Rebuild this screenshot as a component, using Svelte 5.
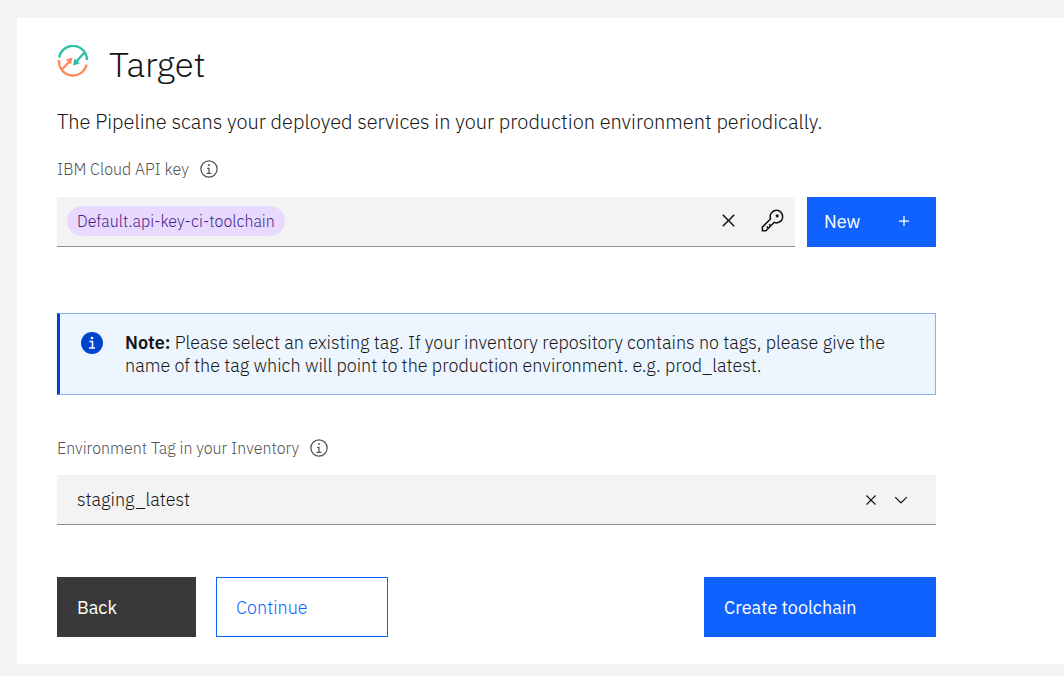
<script>
  let tag = $state('staging_latest');
  let keyName = $state('Default.api-key-ci-toolchain');
</script>

{#snippet info()}
  <svg width="20" height="20" viewBox="0 0 32 32" fill="currentColor" aria-hidden="true">
    <path d="M17 22V14H13v2h2v6H12v2h8V22zM16 8a1.5 1.5 0 1 0 1.5 1.5A1.5 1.5 0 0 0 16 8z" />
    <path d="M16 30A14 14 0 1 1 30 16 14 14 0 0 1 16 30zm0-26A12 12 0 1 0 28 16 12 12 0 0 0 16 4z" />
  </svg>
{/snippet}

{#snippet close(size)}
  <svg width={size} height={size} viewBox="0 0 32 32" fill="currentColor" aria-hidden="true">
    <path d="M24 9.4L22.6 8 16 14.6 9.4 8 8 9.4 14.6 16 8 22.6 9.4 24 16 17.4 22.6 24 24 22.6 17.4 16z" />
  </svg>
{/snippet}

<main>
  <section class="content">
    <header>
      <svg width="32" height="32" viewBox="0 0 32 32" fill="none" stroke-width="2.4" aria-hidden="true">
        <g stroke="#2bc0a8">
          <path d="M2.200 12.500A14 14 0 0 1 30 15" />
          <path d="M27 8L19 17" />
        </g>
        <path fill="#2bc0a8" d="M16 20.500l1.500-7 5.200 5z" />
        <g stroke="#fb8a5c">
          <path d="M2 15A14 14 0 0 0 29.600 19.500" />
          <path d="M4.500 25L12 17" />
        </g>
        <path fill="#fb8a5c" d="M15.500 12.500l-1.500 7-5.200-5z" />
      </svg>
      <h1>Target</h1>
    </header>
    <p class="intro">The Pipeline scans your deployed services in your production environment periodically.</p>

    <div class="label">
      <span id="key-label">IBM Cloud API key</span>
      <button class="icon" aria-label="About the API key">{@render info()}</button>
    </div>
    <div class="key-row">
      <div class="field" role="group" aria-labelledby="key-label">
        <div class="value">{#if keyName}<span class="chip">{keyName}</span>{/if}</div>
        <button class="icon" aria-label="Clear API key" onclick={() => (keyName = '')}>{@render close(25)}</button>
        <button class="icon key" aria-label="Choose a stored key">
          <svg width="25" height="25" viewBox="0 0 32 32" fill="currentColor" aria-hidden="true">
            <path d="M21 2a9 9 0 0 0-8.612 11.612L2 24v6h6l10.388-10.388A9 9 0 1 0 21 2zm0 16a7 7 0 0 1-2.032-.302l-1.147-.348-.847.847-3.181 3.181L12.414 20 11 21.414l1.379 1.379-1.586 1.586L9.414 23 8 24.414l1.379 1.379L7.172 28H4v-3.172l9.802-9.802.848-.847-.348-1.147A7 7 0 1 1 21 18z" />
            <circle cx="22" cy="10" r="2" />
          </svg>
        </button>
      </div>
      <button class="new">
        New
        <svg width="20" height="20" viewBox="0 0 32 32" fill="currentColor" aria-hidden="true">
          <path d="M17 15V8h-2v7H8v2h7v7h2v-7h7v-2z" />
        </svg>
      </button>
    </div>

    <div class="note">
      <svg width="24" height="24" viewBox="0 0 24 24" aria-hidden="true">
        <circle cx="12" cy="12" r="11" fill="#0043ce" />
        <circle cx="12" cy="7" r="1.300" fill="#fff" />
        <path d="M9.500 10.500h3v6M9 17h6" fill="none" stroke="#fff" stroke-width="1.600" />
      </svg>
      <p><strong>Note:</strong> Please select an existing tag. If your inventory repository contains no tags, please give the name of the tag which will point to the production environment. e.g. prod_latest.</p>
    </div>

    <div class="label">
      <label for="tag">Environment Tag in your Inventory</label>
      <button class="icon" aria-label="About the environment tag">{@render info()}</button>
    </div>
    <div class="field">
      <input id="tag" type="text" bind:value={tag} />
      <button class="icon" aria-label="Clear tag" onclick={() => (tag = '')}>{@render close(20)}</button>
      <button class="icon open" aria-label="Open tag list">
        <svg width="20" height="20" viewBox="0 0 16 16" fill="currentColor" aria-hidden="true">
          <path d="M8 11L3 6l.7-.7L8 9.600l4.300-4.300.7.7z" />
        </svg>
      </button>
    </div>

    <footer>
      <button class="back">Back</button>
      <button class="continue">Continue</button>
      <button class="create">Create toolchain</button>
    </footer>
  </section>
</main>

<style>
  :global(body) {
    margin: 0;
    background: #f3f3f3;
  }
  main {
    margin: 18px 0 12px 17px;
    padding: 26px 128px 27px 40px;
    background: #fff;
    color: #161616;
    font-family: "IBM Plex Sans", "Noto Sans", sans-serif;
    font-size: 18px;
    font-weight: 300;
  }
  h1, p {
    margin: 0;
    font-weight: 300;
  }
  header {
    display: flex;
    gap: 20px;
  }
  header svg {
    margin-top: 1px;
  }
  h1 {
    font-size: 35px;
    line-height: 40px;
  }
  .intro {
    margin-top: 25px;
    font-size: 20px;
    line-height: 26px;
  }
  .label {
    display: flex;
    align-items: center;
    gap: 10px;
    margin-top: 24px;
    height: 20px;
    font-size: 16px;
    color: #525252;
  }
  button, input {
    font: inherit;
    color: inherit;
    border: 0;
    border-radius: 0;
    background: none;
  }
  button {
    cursor: pointer;
  }
  .icon {
    display: flex;
    flex: none;
    padding: 0;
  }
  .key-row {
    display: flex;
    gap: 12px;
    margin-top: 18px;
  }
  .field {
    display: flex;
    align-items: center;
    flex: 1;
    box-sizing: border-box;
    height: 50px;
    padding: 0 10px;
    background: #f3f3f3;
    border-bottom: 1px solid #8d8d8d;
  }
  .key-row .field,
  .new {
    padding-bottom: 2px;
  }
  .value {
    display: flex;
    flex: 1;
  }
  .chip {
    padding: 0 10px;
    border-radius: 15px;
    background: #e8daff;
    color: #491d8b;
    font-size: 16px;
    line-height: 30px;
  }
  .key {
    margin-left: 19px;
  }
  .new {
    display: flex;
    align-items: center;
    justify-content: space-between;
    width: 129px;
    padding: 0 22px 2px 17px;
    background: #0f62fe;
    color: #fff;
    font-weight: 400;
  }
  .note {
    display: flex;
    gap: 21px;
    margin: 66px 0 43px;
    padding: 17px 24px 17px 20px;
    border: 1px solid #8eb0f0;
    border-left: 3px solid #0043ce;
    background: #edf5ff;
    line-height: 23px;
  }
  .note svg {
    flex: none;
  }
  strong {
    font-weight: 600;
  }
  .label + .field {
    margin-top: 17px;
  }
  input {
    flex: 1;
    min-width: 0;
    padding: 0 10px;
  }
  .open {
    margin: 0 15px 0 10px;
  }
  footer {
    display: flex;
    gap: 20px;
    margin-top: 52px;
  }
  footer button {
    height: 60px;
    padding: 0 20px;
    text-align: left;
  }
  .back {
    width: 139px;
    background: #393939;
    color: #fff;
    font-weight: 400;
  }
  .continue {
    width: 172px;
    padding: 0 19px;
    border: 1px solid #0f62fe;
    color: #0f62fe;
  }
  .create {
    width: 232px;
    margin-left: auto;
    background: #0f62fe;
    color: #fff;
    font-weight: 400;
  }
</style>
